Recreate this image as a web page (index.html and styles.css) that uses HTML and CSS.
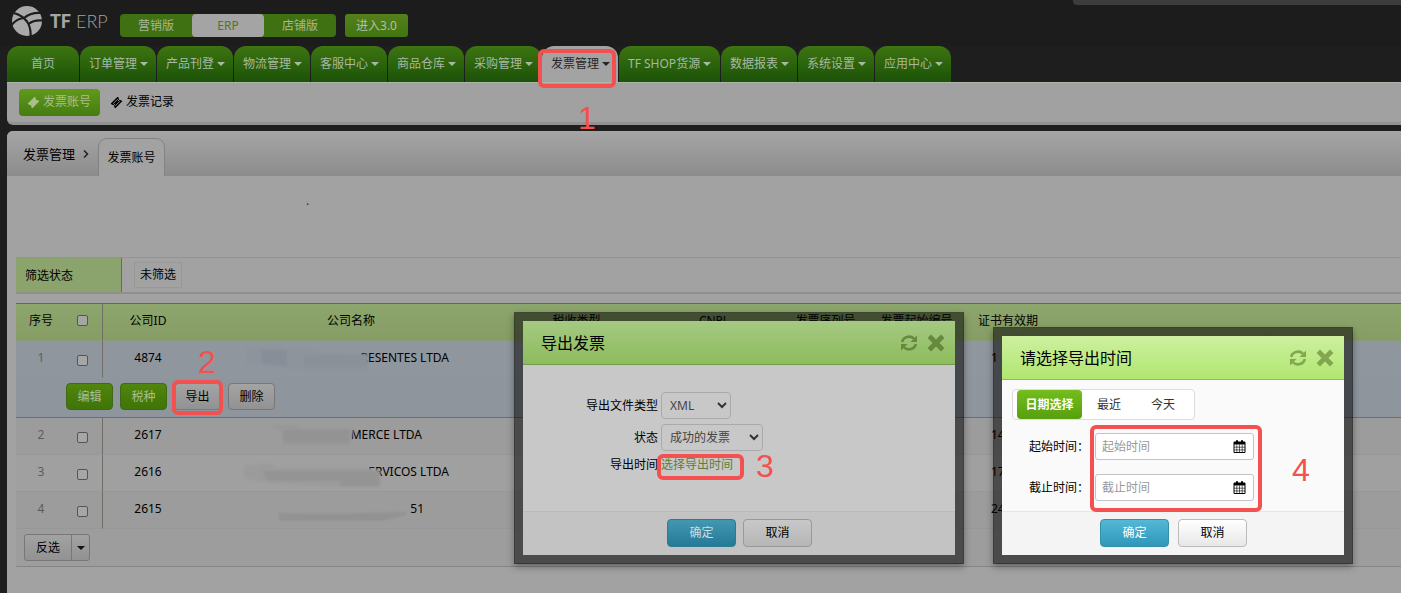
FILE: index.html
```html
<!DOCTYPE html>
<html lang="zh-CN">
<head>
<meta charset="utf-8">
<title>TF ERP</title>
<link rel="stylesheet" href="styles.css">
</head>
<body>
<svg class="defs" width="0" height="0" aria-hidden="true">
  <symbol id="ticket" viewBox="0 0 14 14"><path d="M8.2.8 9.6 2.1a1.6 1.6 0 0 0 2.2 2.2l1.4 1.4L5.8 13.2 4.4 11.8a1.6 1.6 0 0 0-2.2-2.2L.8 8.200z" fill="currentColor"/><path d="M8 3.700 10.300 6 6 10.300 3.700 8z" fill="none" stroke="var(--hole)" stroke-width=".9"/></symbol>
  <symbol id="refresh" viewBox="0 0 18 18"><path d="M2.200 8A6.900 6.200 0 0 1 14 4.600M15.800 10A6.900 6.200 0 0 1 4 13.400" fill="none" stroke="currentColor" stroke-width="2.600"/><path d="M17 1.500V8h-6.500zM1 16.500V10h6.500z" fill="currentColor"/></symbol>
  <symbol id="close" viewBox="0 0 18 18"><path d="M4 4 14 14M14 4 4 14" fill="none" stroke="currentColor" stroke-width="4.800" stroke-linecap="square"/></symbol>
  <symbol id="calendar" viewBox="0 0 13 13"><path d="M1 2h11v10.500H1z" fill="none" stroke="currentColor"/><path d="M1 2h11v2.500H1zM3 .3h2v3H3zM8 .3h2v3H8z" fill="currentColor"/><path d="M1 7.200h11M1 9.900h11M3.800 4.500v8M6.500 4.500v8M9.200 4.500v8" stroke="currentColor" stroke-width=".6"/></symbol>
</svg>

<header class="topbar">
  <a class="logo" href="#">
    <svg width="32" height="32" viewBox="0 0 32 32" aria-hidden="true">
      <circle cx="16" cy="16" r="15" fill="#a9a9a9"/>
      <path d="M3 8C8 9.500 13 12.500 16 16.500 19 21 20 26 19.500 32M12.500 13.500C17 9.500 23 7.500 30 8M17.500 19C21 16 26 15 32 15.500M0 20.500C3 17 7.500 13.500 12.500 13" fill="none" stroke="#1d1d1d" stroke-width="2.200"/>
    </svg>
    <span class="logo-text"><b>TF</b> ERP</span>
  </a>
  <div class="versions">
    <button type="button">营销版</button>
    <button type="button" class="on">ERP</button>
    <button type="button">店铺版</button>
  </div>
  <button type="button" class="enter">进入3.0</button>
  <div class="notice"></div>
</header>

<nav class="tabs">
  <a href="#" class="home">首页</a>
  <a href="#" class="more">订单管理</a>
  <a href="#" class="more">产品刊登</a>
  <a href="#" class="more">物流管理</a>
  <a href="#" class="more">客服中心</a>
  <a href="#" class="more">商品仓库</a>
  <a href="#" class="more">采购管理</a>
  <a href="#" class="more current">发票管理</a>
  <a href="#" class="more wide">TF SHOP货源</a>
  <a href="#" class="more">数据报表</a>
  <a href="#" class="more">系统设置</a>
  <a href="#" class="more">应用中心</a>
</nav>

<nav class="submenu">
  <a href="#" class="active"><svg width="13" height="13" aria-hidden="true"><use href="#ticket"/></svg>发票账号</a>
  <a href="#"><svg width="13" height="13" aria-hidden="true"><use href="#ticket"/></svg>发票记录</a>
</nav>

<main class="panel">
  <div class="crumbs">
    <span class="parent">发票管理</span>
    <svg class="chevron" width="6" height="8" viewBox="0 0 6 8" aria-hidden="true"><path d="M1 .500 4.500 4 1 7.500" fill="none" stroke="#222" stroke-width="1.500"/></svg>
    <span class="here">发票账号</span>
  </div>
  <p class="note">.</p>
  <div class="filter">
    <span class="filter-name">筛选状态</span>
    <span class="filter-value">未筛选</span>
  </div>

  <table class="list">
    <colgroup>
      <col class="c-no"><col class="c-check"><col class="c-id"><col class="c-name"><col class="c-type"><col class="c-cnpj"><col class="c-serial"><col class="c-start"><col class="c-valid"><col>
    </colgroup>
    <thead>
      <tr><th>序号</th><th class="line"><input type="checkbox" aria-label="全选"></th><th>公司ID</th><th>公司名称</th><th>税收类型</th><th>CNPJ</th><th>发票序列号</th><th>发票起始编号</th><th>证书有效期</th><th></th></tr>
    </thead>
    <tbody>
      <tr class="selected">
        <td class="no">1</td><td class="line"><input type="checkbox" aria-label="4874"></td><td>4874</td>
        <td><span class="name w-l">RESENTES LTDA<svg class="mask" width="126" height="34" viewBox="0 0 126 34" aria-hidden="true"><path d="M4 7 28 6 62 9l40 4h24v18H78L45 27 4 23z" fill="#8e949c"/><path d="M20 9l25 0v16l-25-3z" fill="#888e97"/><path d="M62 14h64v12H62z" fill="#8b9199"/></svg></span></td>
        <td></td><td></td><td></td><td></td><td class="date">1</td><td></td>
      </tr>
      <tr class="selected actions">
        <td colspan="10"><div class="buttons">
          <button type="button" class="btn green">编辑</button>
          <button type="button" class="btn green">税种</button>
          <button type="button" class="btn">导出</button>
          <button type="button" class="btn">删除</button>
        </div></td>
      </tr>
      <tr class="odd">
        <td class="no">2</td><td class="line"><input type="checkbox" aria-label="2617"></td><td>2617</td>
        <td><span class="name w-s">MERCE LTDA<svg class="mask" width="88" height="34" viewBox="0 0 88 34" aria-hidden="true"><path d="M4 7h22l4 3h50l5 1-5 16H14V12H4z" fill="#989898"/><path d="M14 12h66v12H14z" fill="#939393"/></svg></span></td>
        <td></td><td></td><td></td><td></td><td class="date">14</td><td></td>
      </tr>
      <tr>
        <td class="no">3</td><td class="line"><input type="checkbox" aria-label="2616"></td><td>2616</td>
        <td><span class="name w-l">ERVICOS LTDA<svg class="mask" width="140" height="34" viewBox="0 0 140 34" aria-hidden="true"><path d="M2 10 30 9l6 4h90l12 2v17H100L20 27 2 23z" fill="#9b9b9b"/><path d="M20 16h78v10H26zM98 16h40v15H98z" fill="#949494"/></svg></span></td>
        <td></td><td></td><td></td><td></td><td class="date">17</td><td></td>
      </tr>
      <tr class="odd">
        <td class="no">4</td><td class="line"><input type="checkbox" aria-label="2615"></td><td>2615</td>
        <td><span class="name w-m">51<svg class="mask" width="140" height="34" viewBox="0 0 140 34" aria-hidden="true"><path d="M12 21 50 22l48-1 42-1-2 3-24 6H12z" fill="#929292"/></svg></span></td>
        <td></td><td></td><td></td><td></td><td class="date">24</td><td></td>
      </tr>
    </tbody>
  </table>
  <div class="list-foot">
    <div class="split">
      <button type="button">反选</button><button type="button" class="drop" aria-label="更多"></button>
    </div>
  </div>
</main>

<section class="dialog export" role="dialog" aria-label="导出发票">
  <div class="dialog-head">
    <h2>导出发票</h2>
    <button type="button" aria-label="刷新"><svg width="18" height="18"><use href="#refresh"/></svg></button>
    <button type="button" aria-label="关闭"><svg width="18" height="18"><use href="#close"/></svg></button>
  </div>
  <div class="dialog-body">
    <div class="row"><label for="type">导出文件类型</label><select id="type"><option>XML</option></select></div>
    <div class="row"><label for="state">状态</label><select id="state" class="long"><option>成功的发票</option></select></div>
    <div class="row short"><span class="label">导出时间</span><a href="#">选择导出时间</a></div>
  </div>
  <div class="dialog-foot">
    <button type="button" class="btn big blue">确定</button>
    <button type="button" class="btn big">取消</button>
  </div>
</section>

<section class="dialog time" role="dialog" aria-label="请选择导出时间">
  <div class="dialog-head">
    <h2>请选择导出时间</h2>
    <button type="button" aria-label="刷新"><svg width="18" height="18"><use href="#refresh"/></svg></button>
    <button type="button" aria-label="关闭"><svg width="18" height="18"><use href="#close"/></svg></button>
  </div>
  <div class="dialog-body">
    <div class="segment">
      <button type="button" class="on">日期选择</button>
      <button type="button">最近</button>
      <button type="button">今天</button>
    </div>
    <div class="field"><label for="from">起始时间：</label><span class="box"><input id="from" type="text" placeholder="起始时间"><svg width="13" height="13" aria-hidden="true"><use href="#calendar"/></svg></span></div>
    <div class="field"><label for="to">截止时间：</label><span class="box"><input id="to" type="text" placeholder="截止时间"><svg width="13" height="13" aria-hidden="true"><use href="#calendar"/></svg></span></div>
  </div>
  <div class="dialog-foot">
    <button type="button" class="btn big blue">确定</button>
    <button type="button" class="btn big">取消</button>
  </div>
</section>

<div class="mark m1"></div><span class="step s1">1</span>
<div class="mark m2"></div><span class="step s2">2</span>
<div class="mark m3"></div><span class="step s3">3</span>
<div class="mark m4"></div><span class="step s4">4</span>
</body>
</html>
```
FILE: styles.css
```css
* { box-sizing: border-box; }
body {
  margin: 0;
  min-height: 100vh;
  display: flex;
  flex-direction: column;
  position: relative;
  overflow: hidden;
  background: #1e1e1e;
  color: #000;
  font: 12px/18px "Noto Sans", "Noto Sans CJK SC", sans-serif;
}
button, input, select { font: inherit; color: inherit; margin: 0; }
button { border: 0; padding: 0; background: none; white-space: nowrap; }
a { color: inherit; text-decoration: none; }
svg { display: block; }
.defs { position: absolute; }

.topbar { height: 46px; display: flex; align-items: flex-start; padding-left: 11px; background: #1c1c1c; }
.logo { display: flex; align-items: center; gap: 7px; width: 109px; padding-top: 5px; }
.logo-text { font: 18px/20px Lato, sans-serif; font-weight: 300; color: #a0a0a0; white-space: nowrap; }
.logo-text b { font-weight: 900; color: #a5a5a5; }
.versions { display: flex; margin-top: 14px; border-radius: 4px; background: #3f7112; }
.versions button { width: 72px; height: 23px; color: #a9b79b; }
.versions .on { background: #a4a4a4; color: #56751f; border-radius: 4px; }
.enter { width: 63px; height: 23px; margin: 14px 0 0 9px; border-radius: 3px; background: linear-gradient(#55801c, #40750f); color: #b4bfa6; }
.notice { width: 328px; height: 5px; margin-left: auto; background: #3c3c3c; border-radius: 0 0 0 4px; }

.tabs { display: flex; gap: 1px; margin-left: 7px; }
.tabs a {
  width: 76px; height: 36px; padding-left: 9px;
  display: flex; align-items: center; gap: 3px;
  white-space: nowrap;
  border-radius: 12px 12px 0 0;
  background: linear-gradient(#3d7511, #1b5208);
  color: #a9b8a2;
}
.tabs .home { width: 72px; padding: 0; justify-content: center; }
.tabs .wide { width: 101px; }
.tabs .current { background: #a3a3a3; color: #252525; }
.more::after { content: ""; border: 4px solid transparent; border-top-color: currentColor; border-bottom: 0; }

.submenu {
  height: 43px; margin-left: 7px; padding: 0 12px 1px;
  display: flex; align-items: center; gap: 10px;
  background: #a1a1a1;
  border-top: 1px solid #adb5a9;
  border-bottom: 3px solid #929292;
  border-radius: 0 0 0 6px;
}
.submenu a { --hole: #a1a1a1; display: flex; align-items: center; gap: 3px; }
.submenu .active {
  --hole: #a9bf8c;
  height: 27px; width: 81px; padding-left: 8px;
  border-radius: 4px;
  background: linear-gradient(#5f9a1b, #467c12);
  color: #a9bf8c;
}

.panel { flex: 1; margin: 6px 0 0 7px; background: #a2a2a2; border-radius: 6px 0 0 0; }
.crumbs {
  height: 45px; padding-left: 16px; display: flex; align-items: center;
  background: linear-gradient(#a5a5a5, #8c8c8c);
  border-radius: 6px 0 0 0;
}
.parent { font-size: 13px; }
.chevron { margin: 0 9px 0 8px; }
.here {
  align-self: flex-end; width: 67px; height: 38px; padding-top: 10px;
  text-align: center; white-space: nowrap;
  background: #a2a2a2;
  border: 1px solid #838383; border-bottom: 0; border-radius: 9px 9px 0 0;
}
.note { height: 81px; margin: 0; padding: 16px 0 0 299px; color: #333; }
.filter {
  height: 37px; margin-left: 9px; display: flex; align-items: center;
  border-top: 1px solid #929292; border-bottom: 2px solid #8f8f8b;
}
.filter-name { align-self: stretch; width: 106px; padding: 9px 9px 7px; background: #8ba36c; border-right: 1px solid #62743f; }
.filter-value { margin-left: 12px; padding: 3px 5px; border: 1px solid #989898; line-height: 18px; }

.list { width: calc(100% - 9px); margin: 9px 0 0 9px; table-layout: fixed; border-collapse: separate; border-spacing: 0; border-top: 1px solid #62685a; }
.c-no { width: 50px; } .c-check { width: 37px; } .c-id { width: 90px; } .c-name { width: 316px; }
.c-type { width: 135px; } .c-cnpj { width: 137px; } .c-serial { width: 89px; } .c-start { width: 93px; } .c-valid { width: 90px; }
.list th { height: 37px; padding: 0 0 3px; font-weight: 400; white-space: nowrap; background: linear-gradient(#8da66d, #869d66); border-bottom: 1px solid #8d9a78; }
.list td { height: 37px; padding: 0 0 2px; text-align: center; background: #a0a0a0; border-bottom: 1px solid #989898; }
.list .odd td { background: #9c9c9c; }
.list .selected td { background: #90969e; border-bottom-color: #90969e; }
.list .actions td { height: 40px; background: #8f959d; border-bottom: 1px solid #6f7548; }
.list .line { border-right: 1px solid #6e6e66; }
.list .no { color: #5c5c5c; }
.list .date { text-align: left; padding-left: 28px; }
.list input {
  appearance: none; display: block; width: 11px; height: 11px; margin: 5px auto 0 11px;
  border: 1px solid #555; border-radius: 2px; background: #a6a6a6;
}
.list th input { margin-top: 0; }
.name { position: relative; display: block; margin: 0 auto; text-align: right; white-space: nowrap; }
.w-l { width: 196px; }
.w-m { width: 146px; }
.w-s { width: 142px; }
.mask { position: absolute; left: -11px; top: -8px; filter: blur(1px); }
.buttons { display: flex; gap: 7px; padding-left: 50px; }

.btn {
  width: 47px; height: 27px;
  border: 1px solid #777; border-radius: 4px;
  background: linear-gradient(#a4a4a4, #929292);
}
.btn.green { border-color: #3d6b14; background: linear-gradient(#50850f, #3f7408); color: #a9bd90; }

.list-foot { margin-left: 9px; padding: 5px 8px; background: #9d9d9d; border-bottom: 1px solid #858585; }
.split { display: inline-flex; height: 27px; border: 1px solid #777; border-radius: 3px; background: linear-gradient(#a2a2a2, #929292); vertical-align: top; }
.split button { width: 46px; }
.split .drop { width: 18px; display: flex; align-items: center; justify-content: center; border-left: 1px solid #777; }
.drop::after { content: ""; border: 4px solid transparent; border-top-color: #111; border-bottom: 0; }

.dialog {
  position: absolute; display: flex; flex-direction: column;
  border: 9px solid rgba(0, 0, 0, .52);
  background-clip: padding-box;
  box-shadow: 0 3px 7px rgba(0, 0, 0, .35);
}
.export { left: 514px; top: 312px; width: 450px; height: 252px; background-color: #c8c8c8; }
.time { left: 993px; top: 327px; width: 360px; height: 237px; background-color: #fafafa; }
.dialog-head {
  height: 44px; padding: 0 10px 0 18px; display: flex; align-items: center; gap: 9px;
  background: linear-gradient(#a5c982, #8dbc5d); border-bottom: 1px solid #739b4c;
}
.time .dialog-head { background: linear-gradient(#cdf09f, #b0e670); border-bottom-color: #8fb862; }
.dialog-head h2 { margin: 0 auto 0 0; font-size: 16px; line-height: 24px; font-weight: 400; }
.dialog-head button { color: #66883f; }
.time .dialog-head button { color: #82a750; }
.dialog-body { flex: 1; }
.dialog-foot { height: 44px; display: flex; gap: 7px; align-items: flex-start; padding: 7px 0 0 144px; border-top: 1px solid #bababa; background: #c3c3c3; }
.time .dialog-foot { gap: 9px; padding-left: 98px; background: #f4f4f4; border-color: #e5e5e5; }
.btn.big { width: 69px; height: 28px; }
.export .btn.big { border-color: #999; background: linear-gradient(#c8c8c8, #b6b6b6); }
.time .btn.big { border-color: #bbb; background: linear-gradient(#fff, #e7e7e7); }
.export .btn.blue { border-color: #2c7b94; background: linear-gradient(#4397b0, #257a98); color: #c9dde3; }
.time .btn.blue { border-color: #348fab; background: linear-gradient(#54b8d6, #3097ba); color: #fff; }

.export .dialog-body { padding-top: 27px; }
.row { display: flex; align-items: center; height: 27px; margin-bottom: 5px; gap: 3px; }
.row.short { height: 18px; margin: 0; }
.row label, .row .label { width: 135px; text-align: right; }
.row a { color: #5d7d3c; }
.row select {
  appearance: none; width: 70px; height: 27px; padding: 0 8px;
  border: 1px solid #aaa; border-radius: 4px; color: #444;
  background: url("data:image/svg+xml,%3Csvg xmlns='http://www.w3.org/2000/svg' width='10' height='7'%3E%3Cpath d='M1 1l4 4 4-4' fill='none' stroke='%23333' stroke-width='2'/%3E%3C/svg%3E") no-repeat right 3px center;
}
.row .long { width: 102px; }

.time .dialog-body { padding: 9px 10px 0; }
.segment { display: inline-flex; width: 183px; height: 31px; padding: 0 4px; border: 1px solid #ddd; border-radius: 4px; background: #fff; vertical-align: top; }
.segment button { width: 54px; color: #333; }
.segment .on { width: 65px; color: #fff; font-weight: 700; border-radius: 4px; background: linear-gradient(#74bd1d, #57a00e); }
.field { display: flex; align-items: center; height: 27px; margin-top: 14px; }
.field:nth-child(2) { margin-top: 13px; }
.field label { width: 66px; margin-left: 17px; white-space: nowrap; }
.box { display: flex; align-items: center; width: 159px; height: 27px; padding: 0 7px 0 6px; border: 1px solid #c4c4c8; border-radius: 3px; background: #fff; }
.box input { flex: 1; min-width: 0; padding: 0; border: 0; outline: 0; background: none; }
.box input::placeholder { color: #999; }

.mark { position: absolute; border: 4px solid #f4504f; border-radius: 6px; pointer-events: none; }
.m1 { left: 538px; top: 49px; width: 78px; height: 39px; }
.m2 { left: 172px; top: 380px; width: 51px; height: 35px; }
.m3 { left: 657px; top: 454px; width: 87px; height: 26px; }
.m4 { left: 1090px; top: 425px; width: 172px; height: 87px; }
.step { position: absolute; font: 32px/32px "Liberation Sans", sans-serif; color: #f4504f; }
.s1 { left: 578px; top: 102px; }
.s2 { left: 198px; top: 346px; }
.s3 { left: 756px; top: 450px; }
.s4 { left: 1292px; top: 454px; }
```
